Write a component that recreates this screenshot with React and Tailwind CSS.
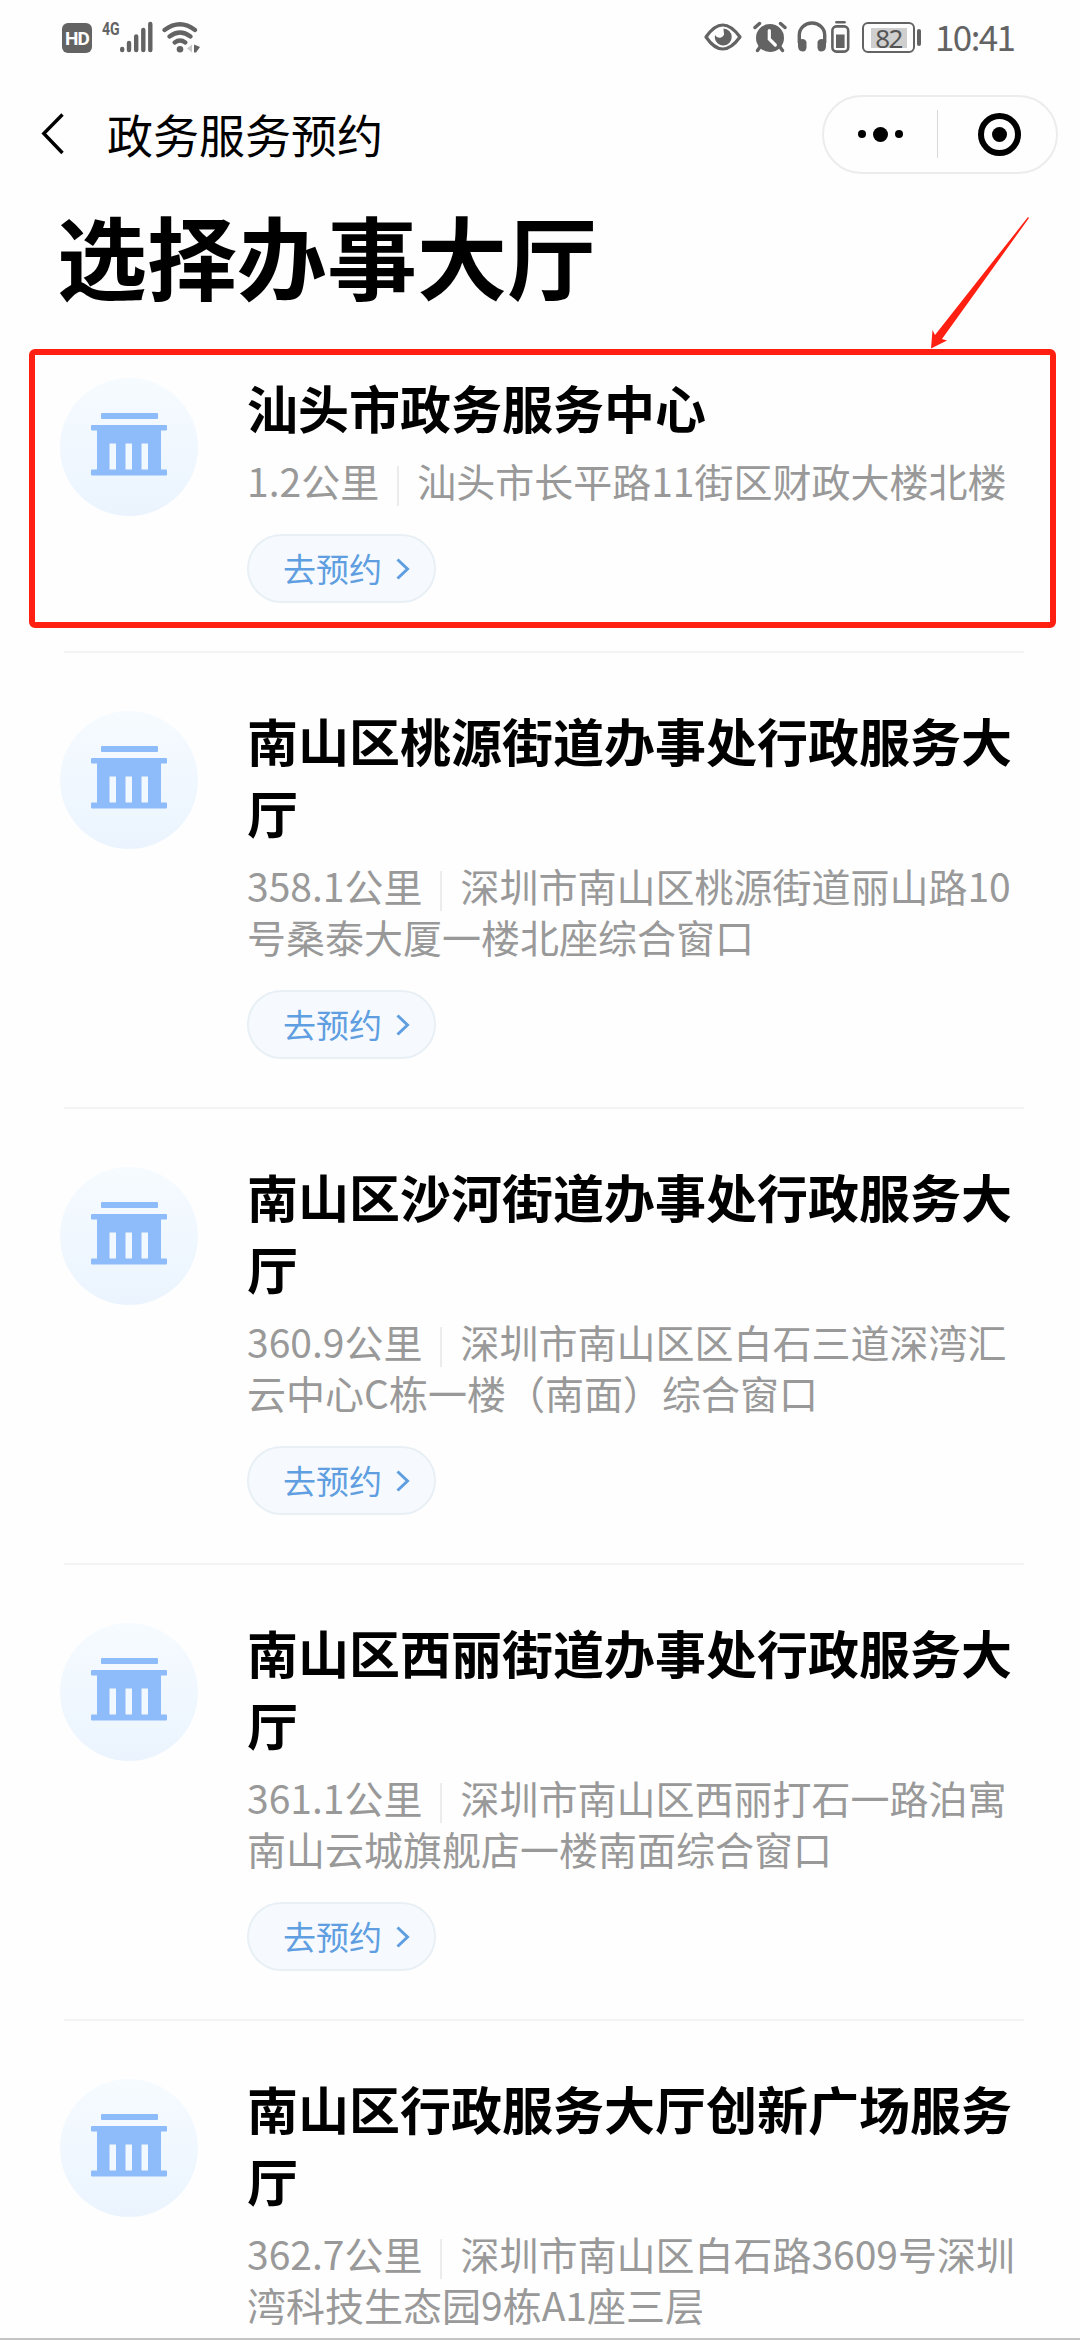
const halls = [
  {
    name: "汕头市政务服务中心",
    distance: "1.2公里",
    address: "汕头市长平路11街区财政大楼北楼",
    marked: true,
  },
  {
    name: "南山区桃源街道办事处行政服务大厅",
    distance: "358.1公里",
    address: "深圳市南山区桃源街道丽山路10号桑泰大厦一楼北座综合窗口",
  },
  {
    name: "南山区沙河街道办事处行政服务大厅",
    distance: "360.9公里",
    address: "深圳市南山区区白石三道深湾汇云中心C栋一楼（南面）综合窗口",
  },
  {
    name: "南山区西丽街道办事处行政服务大厅",
    distance: "361.1公里",
    address: "深圳市南山区西丽打石一路泊寓南山云城旗舰店一楼南面综合窗口",
  },
  {
    name: "南山区行政服务大厅创新广场服务厅",
    distance: "362.7公里",
    address: "深圳市南山区白石路3609号深圳湾科技生态园9栋A1座三层",
  },
];

function StatusBar() {
  return (
    <div className="h-20 flex items-start justify-between pl-[62px] pr-[66px] pt-5 text-[#636363]">
      <div className="flex items-start">
        <div className="mt-[3px] w-[30px] h-[30px] rounded-[6px] bg-[#636363] flex items-center justify-center">
          <span className="font-['Roboto',sans-serif] font-bold text-[19px] leading-none tracking-[-1px] text-[#fefefe]">HD</span>
        </div>
        <span className="ml-[10px] w-[18px] font-['Roboto',sans-serif] font-bold text-[19px] leading-[18px] origin-left scale-x-[0.74]">4G</span>
        <svg className="mt-px" width="33" height="32" viewBox="0 0 33 32" fill="none" stroke="currentColor" strokeWidth="4.4" strokeLinecap="round">
          <path d="M2.200 28v1M9 22v7M16.200 15.500v13.500M23.300 9v20M30.300 3v26" />
        </svg>
        <svg className="ml-[9px] mt-px" width="39" height="32" viewBox="0 0 39 32" fill="none" stroke="currentColor" strokeWidth="4.200" strokeLinecap="round">
          <path d="M2.500 9Q18 -2.500 33 9M7.500 15.500Q18 7.500 28.500 15.500M12.700 21.500Q18 17.500 23.300 21.500" />
          <circle cx="18" cy="28.200" r="3.300" fill="currentColor" stroke="none" />
          <path d="M30 23.500v8l-5-4z" fill="#c9c9c9" stroke="none" />
          <path d="M32 23.500l6 2.500-4 5.500h-2z" fill="currentColor" stroke="none" />
        </svg>
      </div>
      <div className="flex items-start">
        <svg className="mt-[3px]" width="38" height="28" viewBox="0 0 38 28">
          <path d="M2 14Q18.500 -10 36 14Q18.500 38 2 14Z" fill="none" stroke="currentColor" strokeWidth="3.200" strokeLinejoin="round" />
          <path d="M19.500 5.500a8.500 8.500 0 1 1-8.700 9.500l.2-3q2.500 3.800 6 2.500 4-1.500 2.700-6z" fill="currentColor" />
        </svg>
        <svg className="ml-[11px] mt-px" width="34" height="33" viewBox="0 0 34 33" fill="none" stroke="currentColor" strokeLinecap="round">
          <circle cx="17" cy="17" r="14" fill="currentColor" stroke="none" />
          <path d="M2 6.500L6.500 2.500M27.500 2.500L32 6.500M7 26L4.500 29.500M27 26L29.500 29.500" strokeWidth="3.400" />
          <path d="M16.300 9.500v8.500l6 6" stroke="#fefefe" strokeWidth="3.200" />
        </svg>
        <svg className="ml-[10px] mt-px" width="30" height="32" viewBox="0 0 30 32">
          <path d="M2.300 22V14a12.700 12 0 0 1 25.400 0v8" fill="none" stroke="currentColor" strokeWidth="3.400" />
          <path d="M1 19q7-2.500 8.500 2v6q-1 4-4 3.500Q1 30 1 25zM29 19q-7-2.500-8.500 2v6q1 4 4 3.500Q29 30 29 25z" fill="currentColor" />
        </svg>
        <svg className="ml-1" width="19" height="34" viewBox="0 0 19 34">
          <path d="M5.500 2.300h8" stroke="currentColor" strokeWidth="2.600" strokeLinecap="round" />
          <rect x="1.400" y="6.400" width="15.800" height="25.200" rx="4" fill="none" stroke="currentColor" strokeWidth="2.600" />
          <rect x="5" y="14.500" width="8.600" height="13.500" fill="currentColor" />
        </svg>
        <div className="ml-3 mt-0.5 w-[53px] h-[31px] rounded-[6px] border-[2.500px] border-[#636363] flex items-center justify-center">
          <span className="w-[36px] h-[20px] bg-[#cfcfcf] flex items-center justify-center font-['Noto_Sans','Roboto',sans-serif] text-[26px] leading-none text-[#555] tracking-[-1.5px]">82</span>
        </div>
        <div className="ml-0.5 mt-[9px] w-1 h-[17px] rounded-sm bg-[#636363]" />
        <span className="ml-[14px] w-[79px] -mt-[2px] font-['Noto_Sans_CJK_SC',sans-serif] text-[35px] leading-[36px] tracking-[-1.6px] whitespace-nowrap">10:41</span>
      </div>
    </div>
  );
}

function NavBar() {
  return (
    <div className="h-[108px] flex items-center justify-between pl-[41px] pr-[22px]">
      <div className="flex items-center">
        <svg width="24" height="42" viewBox="0 0 24 42" fill="none" stroke="black" strokeWidth="3.400">
          <path d="M21.500 1.500L2.800 20.500L21.500 40" />
        </svg>
        <span className="ml-[42px] -mt-[2px] text-[46px] leading-none">政务服务预约</span>
      </div>
      <div className="w-[236px] h-[79px] rounded-full border-2 border-[#ececec] flex items-center">
        <div className="flex-1 flex items-center justify-center gap-[7px]">
          <i className="w-2 h-2 rounded-full bg-black" />
          <i className="w-[15px] h-[15px] rounded-full bg-black" />
          <i className="w-2 h-2 rounded-full bg-black" />
        </div>
        <div className="w-px h-12 bg-[#d8d8d8]" />
        <div className="flex-1 flex items-center justify-center pl-1.5">
          <div className="w-[43px] h-[43px] rounded-full border-[6px] border-black flex items-center justify-center">
            <i className="w-[15px] h-[15px] rounded-full bg-black" />
          </div>
        </div>
      </div>
    </div>
  );
}

function HallIcon() {
  return (
    <div className="shrink-0 mt-[7px] w-[138px] h-[138px] rounded-full bg-linear-to-b from-[#f6fbff] to-[#ebf4fe] flex items-center justify-center">
      <svg className="mb-1.5" width="76" height="63" viewBox="0 0 76 63">
        <g fill="#8ebbfa">
          <rect x="10" y="0" width="57" height="6" rx="1" />
          <rect x="0" y="12" width="76" height="5.500" rx="1" />
          <rect x="0" y="56.500" width="76" height="6" rx="1" />
          <rect x="6" y="12" width="64" height="50" />
        </g>
        <path d="M18.500 30.500h6.500v26h-6.500zM34.500 30.500h6.500v26h-6.500zM50.500 30.500h6.500v26h-6.500z" fill="#f2f8ff" />
      </svg>
    </div>
  );
}

function HallItem({ hall }) {
  return (
    <li className="relative mx-[60px]">
      <div className="flex items-start pt-[51px] pb-12">
        <HallIcon />
        <div className="ml-[49px] w-[776px] shrink-0">
          <h2 className="text-[51px] leading-[72px] font-bold">{hall.name}</h2>
          <p className="mt-3 text-[39px] leading-[51px] text-[#999]">
            {hall.distance}
            <span className="inline-block align-middle w-0.5 h-10 -my-2 mx-[18px] bg-[#ececec]" />
            {hall.address}
          </p>
          <button className="mt-[28px] w-[189px] h-[69px] pl-[34px] rounded-full border-2 border-[#e8f0f6] bg-[#f6fafe] flex items-center text-[33px] leading-none text-[#5f9ee0]">
            去预约
            <svg className="ml-[14px]" width="14" height="22" viewBox="0 0 14 22" fill="none" stroke="currentColor" strokeWidth="3">
              <path d="M1.500 1.500L11.500 11L1.500 20.500" />
            </svg>
          </button>
        </div>
      </div>
      <div className="ml-1 mr-[-4px] w-[960px] h-0.5 bg-[#f3f3f3]" />
      {hall.marked && (
        <>
          <div className="absolute left-[-31px] top-[29px] w-[1027px] h-[279px] rounded-[6px] border-[6px] border-[#ff2012]" />
          <svg className="absolute left-[868px] top-[-106px]" width="104" height="136" viewBox="0 0 104 136">
            <path d="M100 3L101 4L14 125L19 126.500L3 134.500L4.500 116L7 121Z" fill="#ff2012" />
          </svg>
        </>
      )}
    </li>
  );
}

export default function App() {
  return (
    <div className="w-[1080px] h-[2340px] overflow-hidden flex flex-col bg-[#fefefe] text-black font-['Noto_Sans_CJK_SC',sans-serif] border-b-2 border-[#c4c4c4]">
      <StatusBar />
      <NavBar />
      <h1 className="h-[132px] shrink-0 pl-[57px] pt-[5px] text-[90px] leading-[122px] font-bold">选择办事大厅</h1>
      <ul className="flex-1 min-h-0">
        {halls.map((hall) => (
          <HallItem key={hall.name} hall={hall} />
        ))}
      </ul>
    </div>
  );
}
